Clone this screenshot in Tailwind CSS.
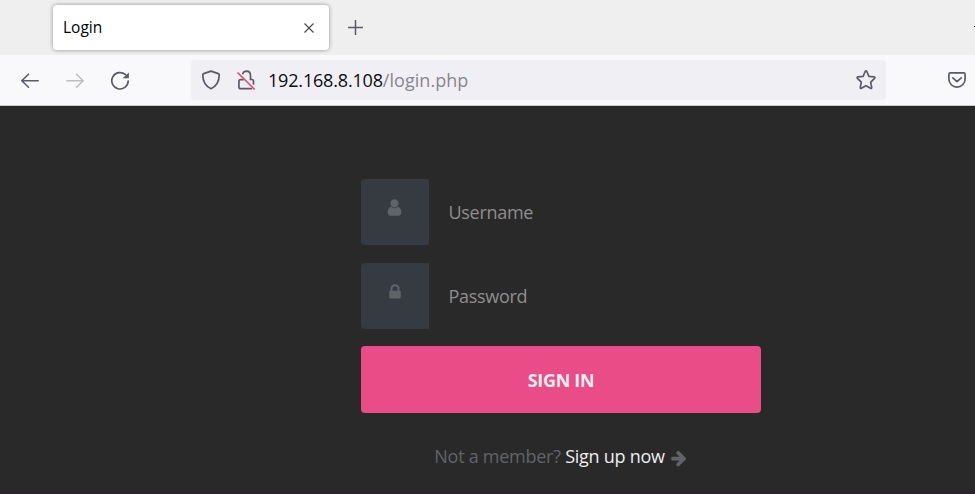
<!DOCTYPE html>
<html lang="en">
<head>
<meta charset="utf-8">
<title>Login</title>
<script src="https://cdn.jsdelivr.net/npm/@tailwindcss/browser@4"></script>
</head>
<body class="w-[975px] h-[494px] overflow-hidden bg-[#292929] flex flex-col">
<!-- Tab strip -->
<div class="relative h-[55px] shrink-0 bg-[#efefef] flex items-start pl-[53px] pt-[5px] font-['Open_Sans',sans-serif]">
  <div class="w-[276px] h-[45px] bg-white rounded-[4px] shadow-[0_0_4px_rgba(0,0,0,0.4)] flex items-center justify-between pl-[10px] pr-[14px]">
    <span class="text-[15.500px] leading-[20px] text-black pb-px">Login</span>
    <svg class="size-3" viewBox="0 0 12 12" fill="none" stroke="#4b4a55" stroke-width="1.2"><path d="M1.500 1.500l9 9M10.500 1.500l-9 9"/></svg>
  </div>
  <svg class="ml-[18px] mt-[14px] size-4" viewBox="0 0 16 16" fill="none" stroke="#5b5b66" stroke-width="1.5"><path d="M8.500 1v15M1 8.500h15"/></svg>
  <div class="absolute right-0 top-[26px] w-px h-px bg-black"></div>
</div>
<!-- Navigation toolbar -->
<div class="h-[51px] shrink-0 bg-[#f9f9fb] border-b border-[#cccccf] flex items-center font-['Open_Sans',sans-serif]">
  <svg class="ml-5 size-5" viewBox="0 0 20 20" fill="none" stroke="#5b5b66" stroke-width="1.600" stroke-linecap="round" stroke-linejoin="round"><path d="M18.200 10.700H1.800M8.500 4.200l-6.700 6.500 6.700 6.500"/></svg>
  <svg class="ml-[25px] size-5" viewBox="0 0 20 20" fill="none" stroke="#bdbdc2" stroke-width="1.600" stroke-linecap="round" stroke-linejoin="round"><path d="M1.800 10.700H18.200M11.500 4.200l6.700 6.500-6.700 6.500"/></svg>
  <svg class="ml-[25px] size-5" viewBox="0 0 20 20"><path d="M15.500 4.700A8.200 8.200 0 1 0 18.200 11" fill="none" stroke="#5b5b66" stroke-width="1.700" stroke-linecap="round"/><path d="M18.900 2.400v5.300q0 .6-.6.6h-5.700z" fill="#5b5b66"/></svg>
  <div class="ml-[61px] w-[695px] h-10 rounded-[4px] bg-[#f0eff4] flex items-center">
    <svg class="ml-[10px] size-5" viewBox="0 0 20 20" fill="none" stroke="#5b5b66" stroke-width="1.700" stroke-linejoin="round"><path d="M10 1.100l7.300 2.500q.9.300.9 1.200c0 7-2.300 11.300-8.200 13.900C4.100 16.100 1.800 11.800 1.800 4.800q0-.9.900-1.200z"/></svg>
    <svg class="ml-[15px] size-5" viewBox="0 0 20 20" fill="none" stroke="#5b5b66" stroke-width="1.700" stroke-linecap="round"><path d="M6.800 3.500Q7.800 1.200 10.400 1.200Q14.500 1.300 14.500 5.500V9.500H15.800q1.700 0 1.700 1.700v2.800M7 9.700H4.600q-1.700 0-1.700 1.700v5.600q0 1.700 1.700 1.700H15.500"/><path d="M2 3l16.200 16" stroke="#f0466f" stroke-width="1.700"/></svg>
    <span class="ml-[12px] text-[18px] leading-6 whitespace-nowrap text-[#0c0c10] w-[587px]"><span class="tracking-[-0.18px]">192.168.8.108</span><span class="text-[#88878e] tracking-[0.05px]">/login.php</span></span>
    <svg class="size-[22px]" viewBox="0 0 22 22" fill="none" stroke="#5b5b66" stroke-width="1.700" stroke-linejoin="round"><path d="M10.200 2.500q.8-1.300 1.600 0l2.100 4.800 5.200.6q1.400.3.500 1.400l-3.900 3.800 1 5.200q.1 1.400-1.100.9L11 16.700l-4.600 2.500q-1.200.5-1.100-.9l1-5.200-3.900-3.800q-.9-1.100.5-1.400l5.200-.6z"/></svg>
  </div>
  <svg class="ml-[61px] size-5" viewBox="0 0 20 20" fill="none" stroke="#5b5b66" stroke-width="1.700" stroke-linecap="round" stroke-linejoin="round"><path d="M3.200 2.900h13.600q1.300 0 1.300 1.300v4.800A8.100 8.100 0 0 1 1.900 9v-4.800Q1.900 2.900 3.200 2.900zM5.800 7.800l4.200 3.800 4.200-3.800"/></svg>
</div>
<!-- Login form -->
<main class="ml-[361px] mt-[73px] w-[400px] font-['Open_Sans',sans-serif] text-[18px] tracking-[-0.3px]">
  <div class="h-[66px] flex items-center mb-[18px]">
    <div class="w-[68px] h-[66px] bg-[#363b41] rounded-l-[4px] flex justify-center pt-[19px] pr-[2px]">
      <svg class="size-[19px]" viewBox="0 0 1792 1792" fill="#606468"><path d="M1536 1399q0 109-62.500 187t-150.500 78h-854q-88 0-150.500-78t-62.500-187q0-85 8.500-160.500t31.500-152 58.500-131 94-89 134.500-34.500q131 128 313 128t313-128q76 0 134.500 34.500t94 89 58.500 131 31.500 152 8.500 160.500zm-256-887q0 159-112.500 271.500t-271.500 112.500-271.500-112.500-112.500-271.500 112.500-271.500 271.500-112.500 271.500 112.500 112.500 271.500z"/></svg>
    </div>
    <span class="ml-[19.500px] text-[#8e8e8e]">Username</span>
  </div>
  <div class="h-[66px] flex items-center mb-[17px]">
    <div class="w-[68px] h-[66px] bg-[#363b41] rounded-l-[4px] flex justify-center pt-[20px]">
      <svg class="size-[18px]" viewBox="0 0 1792 1792" fill="#606468"><path d="M640 768h512v-192q0-106-75-181t-181-75-181 75-75 181v192zm832 96v576q0 40-28 68t-68 28h-960q-40 0-68-28t-28-68v-576q0-40 28-68t68-28h32v-192q0-184 132-316t316-132 316 132 132 316v192h32q40 0 68 28t28 68z"/></svg>
    </div>
    <span class="ml-[19.500px] text-[#8e8e8e]">Password</span>
  </div>
  <button class="block w-full h-[67px] rounded-[4px] bg-[#ea4c88] text-[#eee] font-bold pt-[2px]">SIGN IN</button>
  <p class="mt-[30px] flex items-center justify-center leading-[26px] text-[#606468] whitespace-nowrap tracking-[-0.26px]"><span>Not a member?&nbsp;</span><span class="text-[#eee]">Sign up now</span>
    <svg class="ml-[5px] mt-[3px] size-[18px]" viewBox="0 0 1792 1792" fill="#606468"><path d="M1600 960q0 54-37 91l-651 651q-39 37-91 37-51 0-90-37l-75-75q-38-38-38-91t38-91l293-293h-704q-52 0-84.500-37.500t-32.500-90.500v-128q0-53 32.500-90.500t84.500-37.500h704l-293-294q-38-36-38-90t38-90l75-75q38-38 90-38 53 0 91 38l651 651q37 35 37 90z"/></svg>
  </p>
</main>
<div class="mt-auto h-px shrink-0 bg-[#2b222a]"></div>
</body>
</html>
